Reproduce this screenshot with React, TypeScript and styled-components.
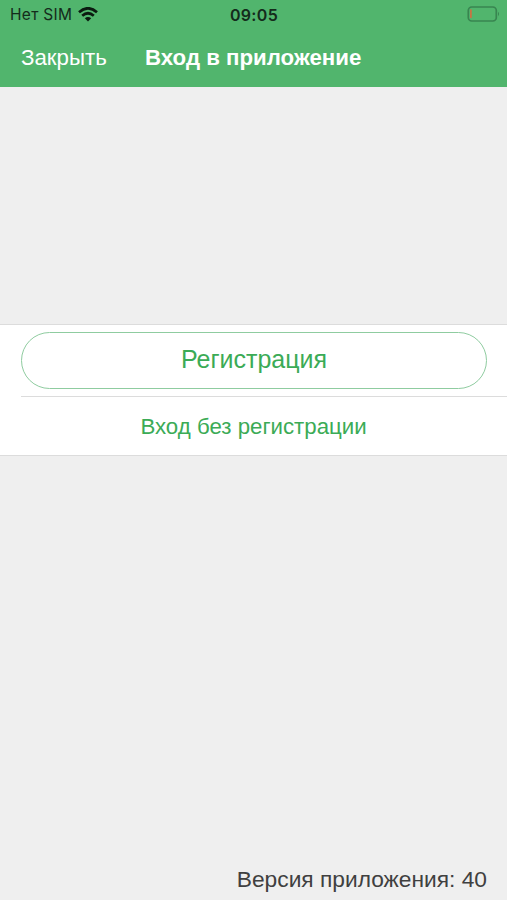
import React from "react";
import styled, { createGlobalStyle } from "styled-components";

const Global = createGlobalStyle`
  * { box-sizing: border-box; }
  body { margin: 0; background: #efefef; font-family: "Liberation Sans", Arial, sans-serif; }
`;
const Screen = styled.main`
  display: flex; flex-direction: column; width: 100%; height: 900px; background: #efefef; overflow: hidden;
`;
const Header = styled.header`
  height: 87px; background: #51b56d; display: flex; flex-direction: column;
`;
const StatusBar = styled.div`
  height: 29px; display: grid; grid-template-columns: 1fr auto 1fr; align-items: center; padding: 0 7px 0 10px;
  font: 400 15.5px/28px Inter, sans-serif; color: #142b1b;
`;
const Carrier = styled.div`display: flex; align-items: center; gap: 6px; letter-spacing: 0.3px; white-space: nowrap;`;
const Clock = styled.div`font-weight: 600; font-size: 16px; letter-spacing: 0.3px; margin-left: -2px; padding-top: 1px;`;
const Battery = styled.div`display: flex; justify-content: flex-end; padding-bottom: 2px;`;
const NavBar = styled.nav`
  height: 58px; display: flex; align-items: center; padding-left: 21px; color: #fff; white-space: nowrap;
`;
const Close = styled.button`
  border: 0; background: none; padding: 0; width: 124px; text-align: left; color: #fff; font: 22.3px/58px "Liberation Sans", Arial, sans-serif;
`;
const Title = styled.h1`margin: 0; font-size: 22.25px; line-height: 58px; font-weight: 700;`;
const Actions = styled.section`
  margin-top: 237px; height: 132px; background: #fff; border-top: 1px solid #dcdcdc; border-bottom: 1px solid #dcdcdc;
`;
const RegisterRow = styled.div`
  height: 72px; margin-left: 21px; padding: 7px 20px 7px 0; border-bottom: 1px solid #dcdcdc;
`;
const Register = styled.button`
  width: 100%; height: 57px; border: 1.5px solid #8fcca0; border-radius: 29px; background: #fff; padding: 0 0 2px;
  color: #3bab56; font: 25px "Liberation Sans", Arial, sans-serif;
`;
const Guest = styled.button`
  width: 100%; height: 58px; border: 0; background: none; padding: 2px 0 0; color: #3bab56; font: 22.25px "Liberation Sans", Arial, sans-serif;
`;
const Version = styled.footer`
  margin-top: auto; padding: 0 20px 8px; text-align: right; font-size: 22.75px; line-height: 26px; color: #404040;
`;

export default function App() {
  return (
    <Screen>
      <Global />
      <Header>
        <StatusBar>
          <Carrier>
            <span>Нет SIM</span>
            <svg width="20" height="15" viewBox="0 0 20 15" fill="none" stroke="#0b1a10" strokeWidth="2.7">
              <path d="M1 5.2Q10-2.6 19 5.2M4.2 8.8Q10 3.7 15.8 8.8" />
              <path d="M10 14.5 6.8 11.2Q10 8.6 13.2 11.2Z" fill="#0b1a10" stroke="none" />
            </svg>
          </Carrier>
          <Clock>09:05</Clock>
          <Battery>
            <svg width="33" height="16" viewBox="0 0 33 16" fill="none">
              <rect x="1.3" y="1" width="28" height="14" rx="3.5" stroke="#388550" strokeWidth="1.7" />
              <rect x="3" y="3.2" width="1.8" height="9" rx="0.9" fill="#c77443" />
              <path d="M31 5.8Q33 8 31 10.2Z" fill="#388550" />
            </svg>
          </Battery>
        </StatusBar>
        <NavBar><Close>Закрыть</Close><Title>Вход в приложение</Title></NavBar>
      </Header>
      <Actions>
        <RegisterRow><Register>Регистрация</Register></RegisterRow>
        <Guest>Вход без регистрации</Guest>
      </Actions>
      <Version>Версия приложения: 40</Version>
    </Screen>
  );
}
